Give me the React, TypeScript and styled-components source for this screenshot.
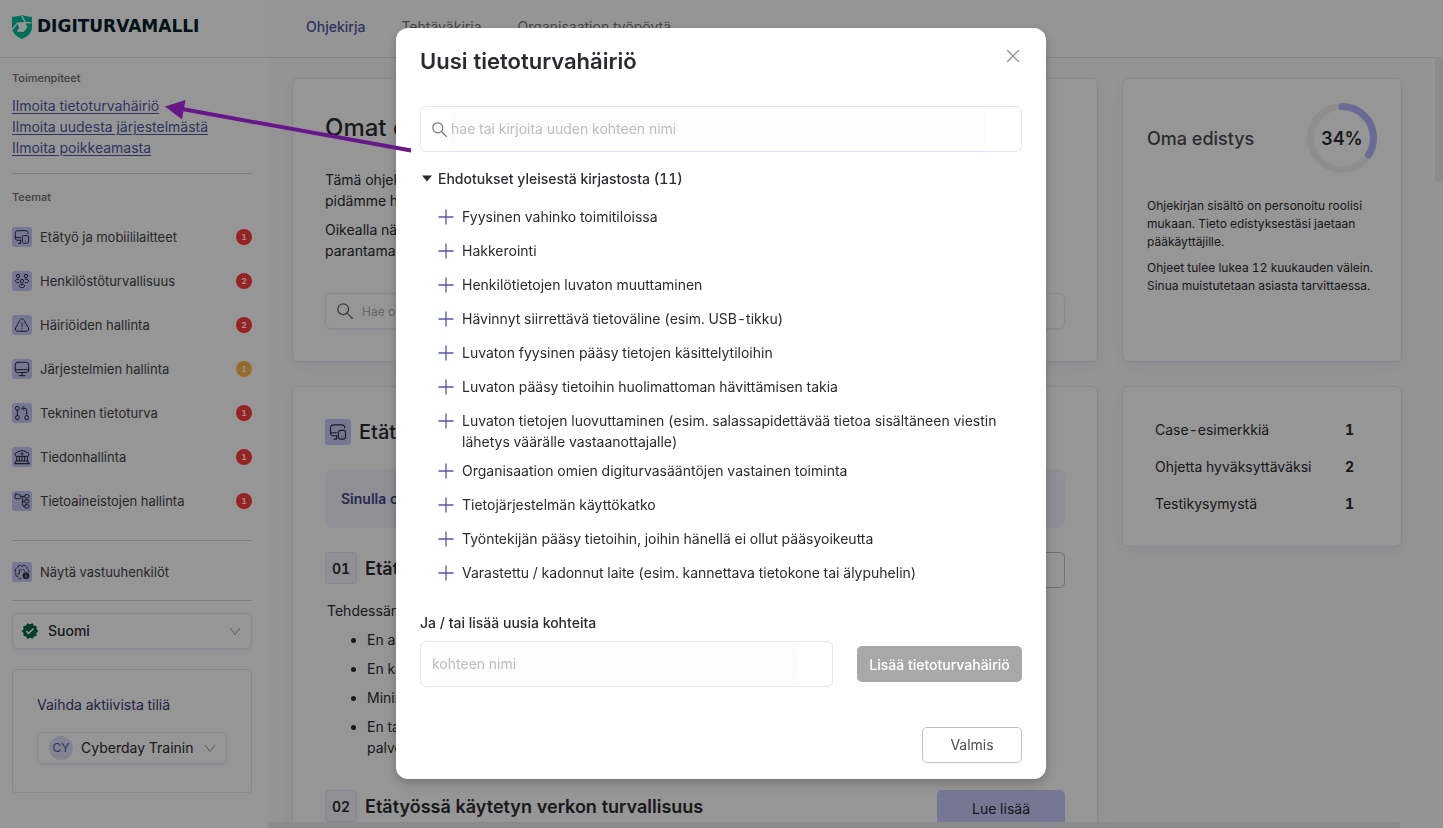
import React from "react";
import styled, { createGlobalStyle } from "styled-components";
import { MdVerified } from "react-icons/md";

const GlobalStyle = createGlobalStyle`
  *, *::before, *::after { box-sizing: border-box; }
  html, body { margin: 0; padding: 0; }
  body {
    font-family: Inter, "Liberation Sans", sans-serif;
    font-size: 14px;
    line-height: 21px;
    font-variant-numeric: tabular-nums;
    color: #2b2b2f;
    background: #fff;
  }
  h1, h2, h3, p, ul { margin: 0; padding: 0; }
  button, input, select { font: inherit; color: inherit; }
`;

const primary = "#5557a5";
const lavender = "#cacbfc";
const line = "#e5e5f8";

/* ---------- icons ---------- */

const iconPaths: Record<string, string[]> = {
  devices: [
    "M10 16.95H6.21C2.84 16.95 2 16.11 2 12.74V6.74C2 3.37 2.84 2.53 6.21 2.53h10.53c3.37 0 4.21.84 4.21 4.21",
    "M10 21.47v-4.52M2 12.95h8M6.74 21.47H10M17.24 18.25h.02",
    "M22 12.8v5.71c0 2.37-.59 2.96-2.96 2.96h-3.55c-2.37 0-2.96-.59-2.96-2.96V12.8c0-2.37.59-2.96 2.96-2.96h3.55c2.37 0 2.96.59 2.96 2.96z",
  ],
  people: [
    "M18 7.16h-.19a2.573 2.573 0 01-2.48-2.58A2.58 2.58 0 0117.91 2a2.58 2.58 0 012.58 2.58c-.01 1.4-1.12 2.53-2.49 2.58z",
    "M16.97 14.44c1.37.23 2.88-.01 3.94-.72 1.41-.94 1.41-2.48 0-3.42-1.07-.71-2.6-.95-3.97-.71",
    "M5.97 7.16h.19a2.573 2.573 0 002.48-2.58A2.58 2.58 0 006.06 2a2.58 2.58 0 00-2.58 2.58c.01 1.4 1.12 2.53 2.49 2.58z",
    "M7 14.44c-1.37.23-2.88-.01-3.94-.72-1.41-.94-1.41-2.48 0-3.42 1.07-.71 2.6-.95 3.97-.71",
    "M12 14.63h-.19a2.573 2.573 0 01-2.48-2.58 2.58 2.58 0 012.58-2.58 2.58 2.58 0 012.58 2.58c-.01 1.4-1.12 2.54-2.49 2.58z",
    "M9.09 17.78c-1.41.94-1.41 2.48 0 3.42 1.6 1.07 4.22 1.07 5.82 0 1.41-.94 1.41-2.48 0-3.42-1.59-1.06-4.22-1.06-5.82 0z",
  ],
  danger: [
    "M12 9v5M12 17h.02",
    "M12 21.41H5.94c-3.47 0-4.92-2.48-3.24-5.51l3.12-5.62L8.76 5c1.78-3.21 4.7-3.21 6.48 0l2.94 5.29 3.12 5.62c1.68 3.03.22 5.51-3.24 5.51H12z",
  ],
  monitor: [
    "M6.44 2h11.11C21.11 2 22 2.89 22 6.44v6.33c0 3.56-.89 4.44-4.44 4.44H6.44C2.89 17.22 2 16.33 2 12.78V6.44C2 2.89 2.89 2 6.44 2z",
    "M12 17.22V22M2 13h20M7.5 22h9",
  ],
  flow: [
    "M5 8a3 3 0 100-6 3 3 0 000 6zM5 22a3 3 0 100-6 3 3 0 000 6zM19 22a3 3 0 100-6 3 3 0 000 6z",
    "M5 8v8M12.5 5h4A2.5 2.5 0 0119 7.5V16M15 2l-3 3 3 3",
  ],
  bank: [
    "M12.37 2.15l9 3.6c.35.14.63.56.63.93V10c0 .55-.45 1-1 1H3c-.55 0-1-.45-1-1V6.68c0-.37.28-.79.63-.93l9-3.6c.2-.08.54-.08.74 0z",
    "M22 22H2v-3c0-.55.45-1 1-1h18c.55 0 1 .45 1 1v3zM4 18v-7M8 18v-7M12 18v-7M16 18v-7M20 18v-7M1 22h22",
    "M12 8.5a1.5 1.5 0 100-3 1.5 1.5 0 000 3z",
  ],
  tree: [
    "M3 1.5h2.5L7 3h1.500A1.500 1.500 0 0110 4.500V7a1.500 1.500 0 01-1.500 1.500H3A1.500 1.500 0 011.500 7V3A1.500 1.500 0 013 1.500z",
    "M10 5h6M13 5v13a2 2 0 002 2h1M13 12.500h3",
    "M18 2.500h2.500a2 2 0 012 2v1a2 2 0 01-2 2H18a2 2 0 01-2-2v-1a2 2 0 012-2zM18 10h2.500a2 2 0 012 2v1a2 2 0 01-2 2H18a2 2 0 01-2-2v-1a2 2 0 012-2zM18 17.500h2.500a2 2 0 012 2v1a2 2 0 01-2 2H18a2 2 0 01-2-2v-1a2 2 0 012-2z",
  ],
  brain: [
    "M8.500 2C6.500 2 5.500 3.500 5.500 5M3.500 6.500C1.500 8 1 10 2 12M2.500 14C2 17 3.500 19 6 19.500M7.500 22c1.500.8 3 .5 3.500-.5M10.500 2.500c1 0 1.500.7 1.700 1.500.5-1.300 2-2.200 4-1.700M18 3.500c1.200.7 1.500 1.700 1.300 3M21 8c1 .8 1.500 2 1.300 3.500",
    "M8 14v-3.500a2 2 0 012-2h1M14 8.500c1 0 2 .7 2 2M6 15.500l2-1.500",
  ],
};

const StrokeSvg = styled.svg<{ $size: number }>`
  display: block;
  width: ${(p) => p.$size}px;
  height: ${(p) => p.$size}px;
  fill: none;
  stroke: currentColor;
  stroke-linecap: round;
  stroke-linejoin: round;
  flex: none;
`;

const ThemeIcon = ({ name, size = 16 }: { name: string; size?: number }) => (
  <StrokeSvg $size={size} viewBox="0 0 24 24" strokeWidth={1.5} aria-hidden="true">
    {iconPaths[name].map((d) => (
      <path key={d} d={d} />
    ))}
    {name === "brain" && (
      <>
        <circle cx="18" cy="17.5" r="5" fill="currentColor" stroke="none" />
        <path d="M18 17v3M18 14.8v.1" stroke={lavender} />
      </>
    )}
  </StrokeSvg>
);

const SearchIcon = ({ size }: { size: number }) => (
  <StrokeSvg $size={size} viewBox="0.5 0.5 15 15" strokeWidth={1.2} aria-hidden="true">
    <circle cx="6.3" cy="6.3" r="5" />
    <path d="M10 10l5 5" />
  </StrokeSvg>
);

const Chevron = () => (
  <StrokeSvg $size={12} viewBox="0 0 12 12" strokeWidth={1} aria-hidden="true">
    <path d="M1.5 3.5L6 9.500l4.500-6" />
  </StrokeSvg>
);

const Plus = () => (
  <StrokeSvg $size={16} viewBox="0 0 16 16" strokeWidth={1.3} aria-hidden="true">
    <path d="M8 .5v15M.5 8h15" strokeLinecap="butt" />
  </StrokeSvg>
);

const ShieldLogo = () => (
  <svg width="20" height="24" viewBox="0 0 20 24" aria-hidden="true">
    <path
      d="M10 0C7 1.2 3.5 1.8 0 1.8V12c0 6 4.500 9.800 10 12 5.500-2.200 10-6 10-12V1.800C16.500 1.800 13 1.200 10 0z"
      fill="#00bd9a"
    />
    <path
      d="M9.500.5l3.800 7M5.500 7.800L.3 14.500M5 15.800l5.500.4M14.800 12l-3.800 4.500M13 7.500l6.500.3"
      fill="none"
      stroke="#fff"
      strokeWidth="1.300"
    />
    <path d="M5.200 7.500l8-.5 2 5-4 4.800-5.700-.5 1.500-3.500z" fill="#fff" />
  </svg>
);

/* ---------- page shell ---------- */

const Page = styled.div`
  display: grid;
  grid-template-columns: 268px minmax(0, 1fr);
  grid-template-rows: 58px minmax(0, 1fr);
  height: 100vh;
  overflow: hidden;
`;

const Brand = styled.div`
  display: flex;
  align-items: center;
  gap: 5px;
  padding: 0 12px 4px;
  border-bottom: 1px solid #e4e4e8;
  font-family: "DejaVu Sans", sans-serif;
  font-size: 17px;
  font-weight: 700;
  color: #03202b;
`;

const Tabs = styled.nav`
  display: flex;
  gap: 14px;
  padding-left: 27px;
  background: #fdfdfd;
  border-bottom: 1px solid #e4e4e8;
`;

const Tab = styled.a<{ $active?: boolean }>`
  position: relative;
  padding: 16px 11px;
  font-weight: ${(p) => (p.$active ? 500 : 400)};
  text-decoration: none;
  color: ${(p) => (p.$active ? primary : "#77777c")};
  &::after {
    content: "";
    display: ${(p) => (p.$active ? "block" : "none")};
    position: absolute;
    left: 0;
    right: 0;
    bottom: -3px;
    height: 2px;
    background: ${primary};
  }
`;

const Sidebar = styled.aside`
  padding: 12px 16px 0 12px;
  background: #fff;
  overflow: hidden;
`;

const SideLabel = styled.h2`
  font-size: 11px;
  line-height: 16px;
  font-weight: 500;
  color: #6d6d72;
`;

const SideLinks = styled.div`
  display: flex;
  flex-direction: column;
  align-items: flex-start;
  margin-top: 9px;
  a { color: ${primary}; text-underline-offset: 2px; }
`;

const Rule = styled.hr<{ $gap?: number }>`
  border: 0;
  height: 1px;
  margin: ${(p) => p.$gap ?? 0}px 0;
  background: #d4d4da;
`;

const ThemeList = styled.ul`
  list-style: none;
  display: flex;
  flex-direction: column;
  padding: 10px 0 17px;
`;

const ThemeRow = styled.li`
  display: flex;
  align-items: center;
  gap: 8px;
  height: 44px;
  font-size: 13px;
  color: #44444a;
`;

const ThemeName = styled.span`
  flex: 1;
`;

const OwnersRow = styled.div`
  display: flex;
  align-items: center;
  gap: 8px;
  height: 59px;
  padding-top: 3px;
  font-size: 13px;
  color: #44444a;
`;

const IconTile = styled.span<{ $size?: number }>`
  display: grid;
  place-items: center;
  width: ${(p) => p.$size ?? 20}px;
  height: ${(p) => p.$size ?? 20}px;
  border-radius: 3px;
  background: ${lavender};
  color: #2c2c40;
`;

const Badge = styled.span<{ $warn?: boolean }>`
  width: 16px;
  height: 16px;
  border-radius: 50%;
  background: ${(p) => (p.$warn ? "#ffb648" : "#ff3b3b")};
  color: #fff;
  font-size: 8px;
  line-height: 16px;
  font-weight: 700;
  text-align: center;
`;

const LanguageArea = styled.div`
  padding-top: 12px;
`;

const SelectBox = styled.label<{ $compact?: boolean }>`
  display: flex;
  align-items: center;
  gap: 8px;
  height: ${(p) => (p.$compact ? 32 : 36)}px;
  padding: 0 ${(p) => (p.$compact ? "10px 0 11px" : "10px 0 8px")};
  border: 1px solid ${line};
  border-radius: 5px;
  box-shadow: 0 1px 3px rgba(80, 80, 150, 0.1);
  color: #9a9aa0;
  select {
    flex: 1;
    min-width: 0;
    appearance: none;
    border: 0;
    padding: 0 0 1px;
    background: none;
    font-weight: ${(p) => (p.$compact ? 400 : 500)};
    color: #2b2b2f;
  }
`;

const VerifiedMark = styled(MdVerified)`
  width: 18px;
  height: 18px;
  margin-right: 1px;
  color: #006a45;
`;

const AccountPanel = styled.section`
  display: flex;
  flex-direction: column;
  gap: 17px;
  margin-top: 20px;
  padding: 24px 24px 28px;
  border: 1px solid ${line};
  border-radius: 3px;
  h2 { font-size: 14px; font-weight: 400; color: #3c3c72; }
`;

const Avatar = styled.span`
  width: 24px;
  height: 24px;
  border-radius: 50%;
  background: #dfdff6;
  color: ${primary};
  font-size: 12px;
  line-height: 24px;
  text-align: center;
`;

/* ---------- main content ---------- */

const Main = styled.main`
  position: relative;
  overflow: hidden;
  padding: 20px 41px 0 24px;
  background: #fcfcfc;
`;

const Columns = styled.div`
  display: grid;
  grid-template-columns: minmax(0, 1fr) 280px;
  gap: 24px;
  align-items: start;
`;

const Card = styled.section`
  align-self: stretch;
  padding: 32px;
  background: #fff;
  border: 1px solid ${line};
  border-radius: 6px;
  box-shadow: 0 4px 16px rgba(90, 90, 160, 0.07);
`;

const SideCard = styled(Card)<{ $stats?: boolean }>`
  align-self: ${(p) => (p.$stats ? "start" : "stretch")};
  padding: ${(p) => (p.$stats ? "24px 32px" : "24px")};
`;

const IntroTitle = styled.h1`
  font-size: 24px;
  line-height: 34px;
  font-weight: 500;
  margin-bottom: 24px;
`;

const IntroText = styled.p`
  margin-bottom: 8px;
`;

const GuideSearch = styled.label`
  display: flex;
  align-items: center;
  gap: 9px;
  height: 36px;
  margin-top: 32px;
  padding: 0 11px;
  border: 1px solid ${line};
  border-radius: 6px;
  box-shadow: 0 1px 3px rgba(80, 80, 150, 0.1);
  color: #66666c;
  input {
    flex: 1;
    min-width: 0;
    border: 0;
    padding: 0;
    background: none;
    font-size: 12px;
  }
  input::placeholder { color: #aeaeb4; opacity: 1; }
`;

const ThemeHeading = styled.div`
  display: flex;
  align-items: center;
  gap: 8px;
  height: 26px;
  h2 { font-size: 20px; line-height: 26px; font-weight: 500; }
`;

const Banner = styled.p`
  margin-top: 24px;
  padding: 19px 16px;
  border-radius: 8px;
  background: #f4f4fb;
  color: #42448a;
  font-weight: 600;
`;

const GuideRow = styled.div<{ $first?: boolean }>`
  display: flex;
  align-items: flex-start;
  gap: 8px;
  margin-top: ${(p) => (p.$first ? 24 : 32)}px;
  h3 { flex: 1; font-size: 18px; line-height: 33px; font-weight: 600; }
`;

const Index = styled.span`
  width: 32px;
  height: 32px;
  border: 1px solid ${line};
  border-radius: 3px;
  background: #f4f4fb;
  font-weight: 600;
  line-height: 32px;
  text-align: center;
`;

const GuideButton = styled.button<{ $filled?: boolean }>`
  width: 128px;
  height: 36px;
  border-radius: 5px;
  border: 1px solid ${(p) => (p.$filled ? lavender : "#c2c2c6")};
  background: ${(p) => (p.$filled ? lavender : "#fff")};
`;

const GuideBody = styled.div`
  margin-top: 12px;
  padding-left: 2px;
  ul { display: flex; flex-direction: column; gap: 8px; margin-top: 8px; padding-left: 40px; }
`;

const ProgressHead = styled.div`
  display: flex;
  align-items: center;
  justify-content: space-between;
  h2 { padding-top: 2px; font-size: 18px; line-height: 24px; font-weight: 500; color: #4a4a50; }
`;

const Ring = styled.div`
  display: grid;
  place-items: center;
  width: 70px;
  height: 70px;
  font-size: 18px;
  font-weight: 600;
  svg, span { grid-area: 1 / 1; }
`;

const ProgressText = styled.div`
  display: flex;
  flex-direction: column;
  gap: 8px;
  margin-top: 24px;
  font-size: 12px;
  line-height: 18px;
`;

const Stats = styled.table`
  width: 100%;
  border-collapse: collapse;
  th, td { height: 37px; padding: 0; }
  th { font-weight: 400; text-align: left; }
  td { padding-right: 15px; font-weight: 700; text-align: right; }
`;

const ScrollThumb = styled.div<{ $horizontal?: boolean }>`
  position: absolute;
  border-radius: 4px;
  background: #ececf0;
  ${(p) =>
    p.$horizontal
      ? "left: 0; right: 43px; bottom: 0; height: 6px;"
      : "right: 0; top: 0; width: 8px; height: 125px;"}
`;

/* ---------- dialog ---------- */

const Mask = styled.div`
  position: fixed;
  inset: 0;
  display: flex;
  justify-content: center;
  align-items: flex-start;
  padding: 28px 1px 0 0;
  background: rgba(0, 0, 0, 0.41);
`;

const Dialog = styled.div`
  width: 650px;
  padding: 16px 24px;
  border-radius: 12px;
  background: #fff;
  box-shadow: 0 6px 16px rgba(0, 0, 0, 0.12), 0 3px 8px rgba(0, 0, 0, 0.14);
`;

const DialogHead = styled.header`
  display: flex;
  align-items: flex-start;
  justify-content: space-between;
  h2 { font-size: 22px; line-height: 34px; font-weight: 600; }
`;

const CloseButton = styled.button`
  display: grid;
  place-items: center;
  width: 18px;
  height: 24px;
  padding: 0;
  border: 0;
  background: none;
  color: #8c8c8c;
`;

const Field = styled.label`
  display: flex;
  align-items: center;
  gap: 4px;
  flex: 1;
  height: 46px;
  padding: 0 35px 0 11px;
  border: 1px solid ${line};
  border-radius: 6px;
  color: #77777c;
  input {
    flex: 1;
    min-width: 0;
    height: 36px;
    padding: 0 0 2px;
    border: 0;
    border-radius: 6px;
    background: #fcfcfc;
    color: #2b2b2f;
  }
  input::placeholder { color: #bdbdbd; opacity: 1; }
`;

const SearchRow = styled.div`
  display: flex;
  margin-top: 28px;
`;

const Suggestions = styled.button`
  display: flex;
  align-items: center;
  gap: 6px;
  margin: 16px 0 17px;
  padding: 0 0 0 2px;
  border: 0;
  background: none;
  font-weight: 500;
`;

const Caret = styled.svg`
  display: block;
  width: 10px;
  height: 8px;
`;

const Options = styled.ul`
  list-style: none;
  display: flex;
  flex-direction: column;
  gap: 8px;
  padding-left: 18px;
`;

const Option = styled.li`
  min-height: 26px;
`;

const OptionButton = styled.button`
  display: flex;
  align-items: flex-start;
  gap: 8px;
  padding: 0;
  border: 0;
  background: none;
  text-align: left;
  svg { margin-top: 3px; color: ${primary}; }
`;

const NewLabel = styled.h3`
  margin: 24px 0 8px;
  font-size: 14px;
  line-height: 21px;
  font-weight: 500;
`;

const NewRow = styled.div`
  display: flex;
  align-items: center;
  gap: 24px;
`;

const AddButton = styled.button`
  width: 165px;
  height: 36px;
  padding: 0;
  border: 0;
  border-radius: 5px;
  background: #a8a8a8;
  color: #fff;
  font-weight: 500;
`;

const DialogFoot = styled.footer`
  display: flex;
  justify-content: flex-end;
  margin-top: 40px;
`;

const DoneButton = styled.button`
  width: 100px;
  height: 36px;
  padding: 0 0 2px;
  border: 1px solid #bfbfbf;
  border-radius: 5px;
  background: #fff;
  color: #4a4a50;
`;

const Pointer = styled.svg`
  position: fixed;
  left: 160px;
  top: 94px;
  width: 256px;
  height: 64px;
  pointer-events: none;
`;

const themes = [
  { icon: "devices", name: "Etätyö ja mobiililaitteet", count: 1 },
  { icon: "people", name: "Henkilöstöturvallisuus", count: 2 },
  { icon: "danger", name: "Häiriöiden hallinta", count: 2 },
  { icon: "monitor", name: "Järjestelmien hallinta", count: 1, warn: true },
  { icon: "flow", name: "Tekninen tietoturva", count: 1 },
  { icon: "bank", name: "Tiedonhallinta", count: 1 },
  { icon: "tree", name: "Tietoaineistojen hallinta", count: 1 },
];

const suggestions = [
  "Fyysinen vahinko toimitiloissa",
  "Hakkerointi",
  "Henkilötietojen luvaton muuttaminen",
  "Hävinnyt siirrettävä tietoväline (esim. USB-tikku)",
  "Luvaton fyysinen pääsy tietojen käsittelytiloihin",
  "Luvaton pääsy tietoihin huolimattoman hävittämisen takia",
  "Luvaton tietojen luovuttaminen (esim. salassapidettävää tietoa sisältäneen viestin lähetys väärälle vastaanottajalle)",
  "Organisaation omien digiturvasääntöjen vastainen toiminta",
  "Tietojärjestelmän käyttökatko",
  "Työntekijän pääsy tietoihin, joihin hänellä ei ollut pääsyoikeutta",
  "Varastettu / kadonnut laite (esim. kannettava tietokone tai älypuhelin)",
];

const stats = [
  { name: "Case-esimerkkiä", value: 1 },
  { name: "Ohjetta hyväksyttäväksi", value: 2 },
  { name: "Testikysymystä", value: 1 },
];

const ringLength = 2 * Math.PI * 31.5;

export default function App() {
  return (
    <>
      <GlobalStyle />
      <Page>
        <Brand>
          <ShieldLogo />
          <span>DIGITURVAMALLI</span>
        </Brand>
        <Tabs>
          <Tab href="#ohjekirja" $active>Ohjekirja</Tab>
          <Tab href="#tehtavakirja">Tehtäväkirja</Tab>
          <Tab href="#tyopoyta">Organisaation työpöytä</Tab>
        </Tabs>

        <Sidebar>
          <SideLabel>Toimenpiteet</SideLabel>
          <SideLinks>
            <a href="#hairio">Ilmoita tietoturvahäiriö</a>
            <a href="#jarjestelma">Ilmoita uudesta järjestelmästä</a>
            <a href="#poikkeama">Ilmoita poikkeamasta</a>
          </SideLinks>
          <Rule $gap={15} />
          <SideLabel>Teemat</SideLabel>
          <ThemeList>
            {themes.map((t) => (
              <ThemeRow key={t.name}>
                <IconTile><ThemeIcon name={t.icon} /></IconTile>
                <ThemeName>{t.name}</ThemeName>
                <Badge $warn={t.warn}>{t.count}</Badge>
              </ThemeRow>
            ))}
          </ThemeList>
          <Rule />
          <OwnersRow>
            <IconTile><ThemeIcon name="brain" /></IconTile>
            <ThemeName>Näytä vastuuhenkilöt</ThemeName>
          </OwnersRow>
          <Rule />
          <LanguageArea>
            <SelectBox>
              <VerifiedMark aria-hidden="true" />
              <select aria-label="Kieli" defaultValue="fi">
                <option value="fi">Suomi</option>
              </select>
              <Chevron />
            </SelectBox>
          </LanguageArea>
          <AccountPanel>
            <h2>Vaihda aktiivista tiliä</h2>
            <SelectBox $compact>
              <Avatar>CY</Avatar>
              <select aria-label="Tili" defaultValue="cy">
                <option value="cy">Cyberday Trainin</option>
              </select>
              <Chevron />
            </SelectBox>
          </AccountPanel>
        </Sidebar>

        <Main>
          <Columns>
            <Card>
              <IntroTitle>Omat ohjeet</IntroTitle>
              <IntroText>
                Tämä ohjekirja sisältää ohjeet, joiden avulla
                <br />
                pidämme huolta tietoturvasta.
              </IntroText>
              <IntroText>
                Oikealla näet oman edistymisesi ohjeiden
                <br />
                parantamassa.
              </IntroText>
              <GuideSearch>
                <SearchIcon size={16} />
                <input placeholder="Hae ohjeita" aria-label="Hae ohjeita" />
              </GuideSearch>
            </Card>
            <SideCard>
              <ProgressHead>
                <h2>Oma edistys</h2>
                <Ring>
                  <svg width="70" height="70" viewBox="0 0 70 70" fill="none" strokeWidth="7" aria-hidden="true">
                    <circle cx="35" cy="35" r="31.5" stroke="#f2f2f2" />
                    <circle
                      cx="35"
                      cy="35"
                      r="31.5"
                      stroke="#b4b5fc"
                      strokeLinecap="round"
                      strokeDasharray={`${ringLength * 0.34} ${ringLength}`}
                      transform="rotate(-90 35 35)"
                    />
                  </svg>
                  <span>34%</span>
                </Ring>
              </ProgressHead>
              <ProgressText>
                <p>Ohjekirjan sisältö on personoitu roolisi mukaan. Tieto edistyksestäsi jaetaan pääkäyttäjille.</p>
                <p>Ohjeet tulee lukea 12 kuukauden välein. Sinua muistutetaan asiasta tarvittaessa.</p>
              </ProgressText>
            </SideCard>

            <Card>
              <ThemeHeading>
                <IconTile $size={26}><ThemeIcon name="devices" size={18} /></IconTile>
                <h2>Etätyö ja mobiililaitteet</h2>
              </ThemeHeading>
              <Banner>Sinulla on ohjeita</Banner>
              <GuideRow $first>
                <Index>01</Index>
                <h3>Etätyön tietoturva</h3>
                <GuideButton>Luettu</GuideButton>
              </GuideRow>
              <GuideBody>
                <p>Tehdessäni etätöitä:</p>
                <ul>
                  <li>En anna muiden käyttää laitteita</li>
                  <li>En käytä suojaamatonta verkkoa</li>
                  <li>Minimoin tulosteiden käytön</li>
                  <li>
                    En tallenna tietoja muualle kuin hyväksyttyihin
                    <br />
                    palveluihin
                  </li>
                </ul>
              </GuideBody>
              <GuideRow>
                <Index>02</Index>
                <h3>Etätyössä käytetyn verkon turvallisuus</h3>
                <GuideButton $filled>Lue lisää</GuideButton>
              </GuideRow>
            </Card>
            <SideCard $stats>
              <Stats>
                <tbody>
                  {stats.map((s) => (
                    <tr key={s.name}>
                      <th scope="row">{s.name}</th>
                      <td>{s.value}</td>
                    </tr>
                  ))}
                </tbody>
              </Stats>
            </SideCard>
          </Columns>
          <ScrollThumb />
          <ScrollThumb $horizontal />
        </Main>
      </Page>

      <Mask>
        <Dialog role="dialog" aria-modal="true" aria-labelledby="dialog-title">
          <DialogHead>
            <h2 id="dialog-title">Uusi tietoturvahäiriö</h2>
            <CloseButton aria-label="Sulje">
              <StrokeSvg $size={12} viewBox="0 0 12 12" strokeWidth={1.2}>
                <path d="M.5.5l11 11M11.5.5l-11 11" />
              </StrokeSvg>
            </CloseButton>
          </DialogHead>
          <SearchRow>
            <Field>
              <SearchIcon size={15} />
              <input placeholder="hae tai kirjoita uuden kohteen nimi" aria-label="Hae" />
            </Field>
          </SearchRow>
          <Suggestions>
            <Caret viewBox="0 0 10 8" aria-hidden="true">
              <path d="M0 .5h10L5 6.5z" fill="currentColor" />
            </Caret>
            Ehdotukset yleisestä kirjastosta (11)
          </Suggestions>
          <Options>
            {suggestions.map((s) => (
              <Option key={s}>
                <OptionButton>
                  <Plus />
                  <span>{s}</span>
                </OptionButton>
              </Option>
            ))}
          </Options>
          <NewLabel>Ja / tai lisää uusia kohteita</NewLabel>
          <NewRow>
            <Field>
              <input placeholder="kohteen nimi" aria-label="Kohteen nimi" />
            </Field>
            <AddButton>Lisää tietoturvahäiriö</AddButton>
          </NewRow>
          <DialogFoot>
            <DoneButton>Valmis</DoneButton>
          </DialogFoot>
        </Dialog>
      </Mask>

      <Pointer viewBox="0 0 256 64" aria-hidden="true">
        <path d="M22 15l229 41.5" stroke="#67178a" strokeWidth="4" fill="none" />
        <path d="M5 12.5L25.5 6 22 25.5z" fill="#67178a" />
      </Pointer>
    </>
  );
}
